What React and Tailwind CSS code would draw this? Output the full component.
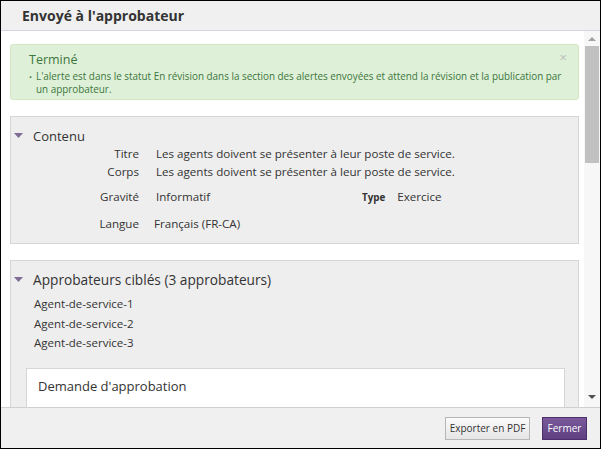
import React from "react";

function Tri() {
  return (
    <svg width="9" height="6" viewBox="0 0 9 6" className="shrink-0">
      <path d="M0 0 L9 0 L4.5 5 Z" fill="#7e6c93" />
    </svg>
  );
}

export default function App() {
  return (
    <div
      className="w-[601px] h-[449px] border border-black bg-white flex flex-col text-[#333]"
      style={{ fontFamily: '"Open Sans", "Noto Sans", sans-serif' }}
    >
      <div className="h-[30px] shrink-0 bg-[#f0f0f0] border-b border-[#d6d6de] flex items-center pl-[21px] text-[14px] font-bold text-[#333]">
        Envoyé à l'approbateur
      </div>
      <div className="flex-1 flex min-h-0">
        <div className="flex-1 overflow-hidden pl-[9px] pr-[5px] pt-[13px] flex flex-col">
          <div className="relative shrink-0 h-[56px] bg-[#dff0d8] border border-[#d3e6c4] rounded-[3px] pl-[18px] pt-[7px] text-[#3c763d]">
            <div className="text-[12.5px] leading-[16px]">Terminé</div>
            <div className="flex mt-[2px] text-[9.9px] leading-[13px]">
              <span className="w-[7px] shrink-0 text-[8px]">•</span>
              <span>
                L'alerte est dans le statut En révision dans la section des alertes envoyées et attend la révision et la publication par
                <br />
                un approbateur.
              </span>
            </div>
            <span className="absolute right-[11px] top-[3px] text-[13px] text-[#bdbdbd]">×</span>
          </div>

          <div className="mt-[16px] shrink-0 h-[128px] bg-[#eeeeee] border border-[#d6d6d6] pt-[10px]">
            <div className="flex items-center pl-[3px] gap-[10px] text-[13px] leading-[18px]">
              <Tri />
              <span>Contenu</span>
            </div>
            <div className="text-[11.6px] leading-[15px]">
              <div className="flex mt-[1px]">
                <span className="w-[128px] text-right">Titre</span>
                <span className="ml-[17px]">Les agents doivent se présenter à leur poste de service.</span>
              </div>
              <div className="flex mt-[3px]">
                <span className="w-[128px] text-right">Corps</span>
                <span className="ml-[17px]">Les agents doivent se présenter à leur poste de service.</span>
              </div>
              <div className="flex mt-[10px] items-baseline">
                <span className="w-[128px] text-right">Gravité</span>
                <span className="ml-[17px] w-[206px]">Informatif</span>
                <span className="font-bold text-[9.8px] text-[#333]">Type</span>
                <span className="ml-[12px]">Exercice</span>
              </div>
              <div className="flex mt-[11px]">
                <span className="w-[128px] text-right">Langue</span>
                <span className="ml-[15px]">Français (FR-CA)</span>
              </div>
            </div>
          </div>

          <div className="mt-[16px] shrink-0 h-[200px] bg-[#eeeeee] border border-[#d6d6d6] pt-[10px]">
            <div className="flex items-center pl-[3px] gap-[10px] leading-[18px]">
              <Tri />
              <span className="text-[13.7px]">Approbateurs ciblés (3 approbateurs)</span>
            </div>
            <div className="text-[11.5px] leading-[15px] pl-[23px] mt-[7px] flex flex-col gap-[4.5px]">
              <span>Agent-de-service-1</span>
              <span>Agent-de-service-2</span>
              <span>Agent-de-service-3</span>
            </div>
            <div className="mt-[18px] ml-[15px] mr-[13px] h-[80px] bg-white border border-[#d6d6d6] pl-[11px] pt-[8px] text-[13px] leading-[18px]">
              Demande d'approbation
            </div>
          </div>
        </div>
        <div className="w-[16px] shrink-0 bg-[#f7f7f7] flex flex-col items-center">
          <svg width="8" height="5" viewBox="0 0 8 5" className="mt-[5px]">
            <path d="M0 5 L8 5 L4 1 Z" fill="#a3a3a3" />
          </svg>
          <div className="mt-[5px] w-[14px] h-[117px] bg-[#c1c1c1]" />
          <div className="flex-1" />
          <svg width="8" height="5" viewBox="0 0 8 5" className="mb-[7px]">
            <path d="M0 0 L8 0 L4 4 Z" fill="#505050" />
          </svg>
        </div>
      </div>
      <div className="h-[41px] shrink-0 border-t border-[#d0d0d0] bg-[#f0f0f0] flex items-center justify-end gap-[12px] pr-[13px]">
        <button className="h-[23px] w-[85px] border border-[#b7b7b7] bg-gradient-to-b from-[#fafafa] to-[#e6e6e6] text-[10px] text-[#333]">
          Exporter en PDF
        </button>
        <button className="h-[23px] w-[45px] border border-[#4c2f6b] bg-gradient-to-b from-[#7a5a9c] to-[#5e3f80] text-[10px] text-white">
          Fermer
        </button>
      </div>
    </div>
  );
}
